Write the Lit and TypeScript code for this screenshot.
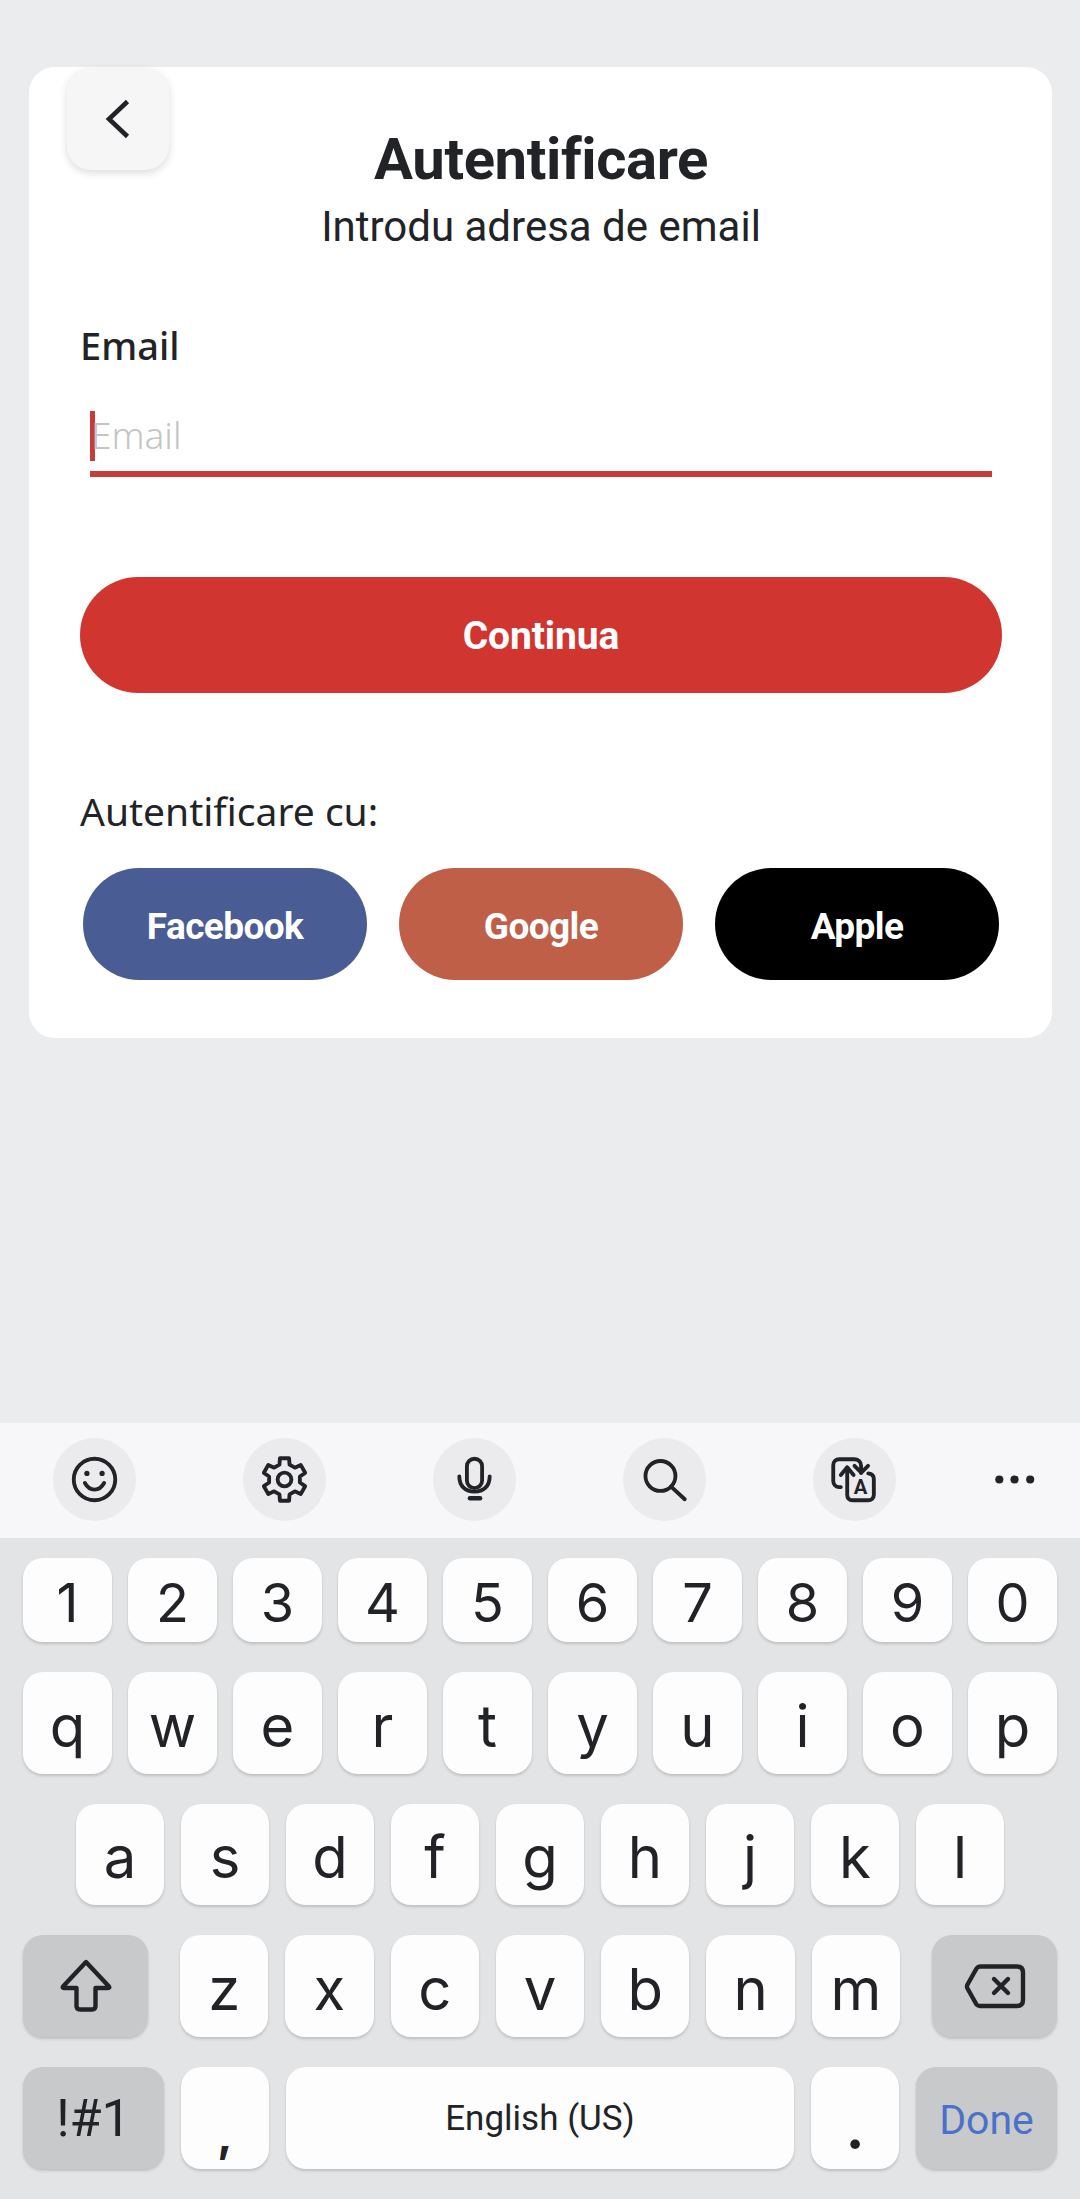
import { LitElement, css, html, svg } from "lit";
import { customElement } from "lit/decorators.js";

const gearPath = () => {
  // six teeth round the centre of the 82 box
  const pts: string[] = [];
  for (let i = 0; i < 6; i++) {
    const a = ((i * 60 - 90) * Math.PI) / 180;
    const step = (deg: number, r: number) => {
      const t = a + (deg * Math.PI) / 180;
      return `${(41 + r * Math.cos(t)).toFixed(1)} ${(41 + r * Math.sin(t)).toFixed(1)}`;
    };
    pts.push(step(-12, 21.5), step(12, 21.5), step(19, 15.5), step(41, 15.5));
  }
  return "M" + pts.join("L") + "Z";
};

const icons = {
  smile: svg`<circle cx="41" cy="41" r="20.5"/><path d="M31.5 44.5c2.5 4.5 5.8 6.5 9.5 6.5s7-2 9.5-6.5"/><circle class="fill" cx="33.5" cy="35" r="2.6"/><circle class="fill" cx="48.5" cy="35" r="2.6"/>`,
  gear: svg`<path d=${gearPath()}/><circle cx="41" cy="41" r="6.800"/>`,
  mic: svg`<rect x="33.5" y="20.5" width="15" height="29" rx="7.5"/><path d="M26 38c0 9.5 6 15 15 15s15-5.500 15-15"/><path d="M36.500 59.500h10" stroke-width="4.500"/>`,
  search: svg`<circle cx="37" cy="37.500" r="14.800"/><path d="M47.500 48l13.500 12.500"/>`,
  translate: svg`<path d="M27.500 48.500h-1.500c-3.500 0-6-2.500-6-6v-15.500c0-3.500 2.500-6 6-6h14.500c4 0 7 2.500 7 6.500v7"/><path d="M27.500 36.500l6.300-7.500 6.300 7.500"/><path d="M33.800 29v27c0 3.500 2 5.500 5.500 5.500h15c3.500 0 5.800-2 5.800-5.500v-15.500c0-3-1.500-5-5.500-5.500"/><path d="M41 27.500l6.700 6.700 6.700-6.700"/><text class="letter" x="47" y="55.500" text-anchor="middle">A</text>`,
  more: svg`<circle class="fill" cx="26" cy="41" r="4"/><circle class="fill" cx="41" cy="41" r="4"/><circle class="fill" cx="56.500" cy="41" r="4"/>`,
};

@customElement("app-root")
export class AppRoot extends LitElement {
  renderKeys(chars: string) {
    return chars.split("").map((c) => html`<div class="key">${c}</div>`);
  }

  render() {
    return html`
      <main class="card">
        <header class="head">
          <button class="back" aria-label="Inapoi">
            <svg width="26" height="40" viewBox="0 0 26 40">
              <path d="M22.500 2.500L4 20l18.500 17.500" />
            </svg>
          </button>
          <div class="titles">
            <h1>Autentificare</h1>
            <p>Introdu adresa de email</p>
          </div>
        </header>

        <div class="label">Email</div>
        <div class="input"><span class="caret"></span><span class="placeholder">Email</span></div>

        <button class="primary">Continua</button>

        <div class="label with">Autentificare cu:</div>
        <div class="social">
          <button class="facebook">Facebook</button>
          <button class="google">Google</button>
          <button class="apple">Apple</button>
        </div>
      </main>

      <section class="keyboard">
        <div class="toolbar">
          ${[icons.smile, icons.gear, icons.mic, icons.search, icons.translate].map(
            (icon) => html`<div class="tool"><svg width="83" height="83" viewBox="0 0 82 82">${icon}</svg></div>`,
          )}
          <div class="tool more"><svg width="83" height="83" viewBox="0 0 82 82">${icons.more}</svg></div>
        </div>
        <div class="keys">
          <div class="row numbers">${this.renderKeys("1234567890")}</div>
          <div class="row">${this.renderKeys("qwertyuiop")}</div>
          <div class="row home">${this.renderKeys("asdfghjkl")}</div>
          <div class="row third">
            <div class="key dark shift">
              <svg width="60" height="60" viewBox="0 0 60 60">
                <path d="M30 6L7 30.500Q6 32 8 32H20.500V50Q20.500 53.500 24 53.500H36Q39.500 53.500 39.500 50V32H52Q54 32 53 30.500Z" />
              </svg>
            </div>
            <div class="letters">${this.renderKeys("zxcvbnm")}</div>
            <div class="key dark shift">
              <svg width="64" height="48" viewBox="0 0 64 48">
                <path d="M17 4.500H54Q60 4.500 60 10.500V38Q60 44 54 44H17Q15 44 13.500 42.500L4.500 26.500Q3.500 24.500 4.500 22.500L13.500 6.500Q15 4.500 17 4.500Z" />
                <path d="M31 17l14 14M45 17l-14 14" />
              </svg>
            </div>
          </div>
          <div class="row bottom">
            <div class="key dark sym">!#1</div>
            <div class="key punct comma">,</div>
            <div class="key space">English (US)</div>
            <div class="key punct">.</div>
            <div class="key dark done">Done</div>
          </div>
        </div>
      </section>
    `;
  }

  static styles = css`
    :host {
      display: flex;
      flex-direction: column;
      min-height: 2199px;
      background: #ebecee;
      color: #222327;
      font-family: "Noto Sans", sans-serif;
    }

    button {
      border: none;
      padding: 0;
      font-family: Roboto, sans-serif;
    }

    .card {
      margin: 67px 28px 0 29px;
      height: 971px;
      box-sizing: border-box;
      padding: 0 50px 0 51px;
      background: #fff;
      border-radius: 26px;
    }

    .head {
      display: grid;
      margin: 0 -51px 0 -51px;
      height: 253px;
    }
    .back,
    .titles {
      grid-area: 1 / 1;
    }
    .back {
      justify-self: start;
      align-self: start;
      margin: 1px 0 0 38px;
      width: 102px;
      height: 102px;
      border-radius: 24px;
      background: #f6f6f6;
      box-shadow: 0 3px 8px rgba(0, 0, 0, 0.14);
      display: flex;
      align-items: center;
      justify-content: center;
      z-index: 1;
    }
    .back svg {
      fill: none;
      stroke: #222327;
      stroke-width: 4.6;
    }
    .titles {
      text-align: center;
      font-family: Roboto, sans-serif;
    }
    h1 {
      margin: 0;
      padding-top: 59px;
      font-size: 58px;
      line-height: 66px;
      font-weight: 700;
      letter-spacing: -0.4px;
    }
    .titles p {
      margin: 0;
      font-size: 42px;
      line-height: 48px;
      padding-top: 11px;
    }

    .label {
      font-size: 38px;
      line-height: 50px;
      font-weight: 500;
    }
    .label.with {
      margin-top: 93px;
      font-size: 39px;
      font-weight: 400;
    }

    .input {
      margin: 41px 10px 0 10px;
      height: 60px;
      display: flex;
      border-bottom: 6px solid #c63c37;
      box-sizing: content-box;
    }
    .caret {
      width: 5px;
      height: 50px;
      background: #c63c37;
      flex: none;
    }
    .placeholder {
      margin-left: -4px;
      height: 48px;
      font-size: 37px;
      line-height: 48px;
      font-weight: 300;
      color: #c4c4c4;
    }

    .primary {
      display: block;
      margin-top: 100px;
      width: 100%;
      height: 116px;
      border-radius: 58px;
      background: #d03530;
      color: #fff;
      font-size: 39px;
      font-weight: 700;
      letter-spacing: -0.1px;
      padding-top: 2px;
    }

    .social {
      display: flex;
      gap: 32px;
      margin: 32px 3px 0;
    }
    .social button {
      flex: 1;
      height: 112px;
      border-radius: 56px;
      color: #fff;
      font-size: 37px;
      font-weight: 700;
      letter-spacing: -0.6px;
      padding-top: 4px;
    }
    .facebook {
      background: #4a5c94;
    }
    .google {
      background: #bf5f48;
    }
    .apple {
      background: #000;
    }

    .keyboard {
      margin-top: auto;
      height: 776px;
      background: #e3e4e6;
      font-family: Inter, sans-serif;
    }
    .toolbar {
      display: flex;
      align-items: center;
      gap: 107px;
      height: 115px;
      padding-left: 53px;
      background: #f7f7f9;
    }
    .tool {
      flex: none;
      width: 83px;
      height: 83px;
      margin-top: -2px;
      border-radius: 50%;
      background: #ebebed;
    }
    .tool.more {
      background: none;
      margin-left: -30px;
    }
    .tool svg {
      display: block;
      fill: none;
      stroke: #222327;
      stroke-width: 3.8;
      stroke-linecap: round;
      stroke-linejoin: round;
    }
    .tool .fill {
      fill: #222327;
      stroke: none;
    }
    .tool .letter {
      fill: #222327;
      stroke: none;
      font: 700 20px Roboto, sans-serif;
    }

    .keys {
      display: flex;
      flex-direction: column;
      gap: 30px;
      padding: 20px 23px 0;
    }
    .row {
      display: flex;
      gap: 16px;
      height: 101.67px;
    }
    .row.numbers {
      height: 84px;
    }
    .row.home {
      gap: 17px;
      padding: 0 53px;
    }
    .row.third {
      gap: 32px;
    }
    .row.bottom {
      gap: 17px;
    }
    .letters {
      flex: 1;
      display: flex;
      gap: 17px;
    }
    .key {
      flex: 1;
      display: flex;
      align-items: center;
      justify-content: center;
      box-sizing: border-box;
      padding-top: 6px;
      background: #fdfdfe;
      border-radius: 20px;
      box-shadow: 0 2px 3px rgba(0, 0, 0, 0.16);
      font-size: 58px;
      line-height: 1;
    }
    .numbers .key {
      font-size: 54px;
      padding-top: 6px;
    }
    .key.dark {
      background: #c8c9cb;
    }
    .key.shift {
      flex: none;
      width: 125px;
      padding-top: 0;
    }
    .shift svg {
      fill: none;
      stroke: #222327;
      stroke-width: 4.4;
      stroke-linejoin: round;
      stroke-linecap: round;
    }
    .key.sym,
    .key.done {
      flex: none;
      width: 141px;
      font-family: Roboto, sans-serif;
      font-size: 52px;
      padding-top: 2px;
    }
    .key.done {
      font-size: 41px;
      color: #4a72c8;
      padding-top: 5px;
    }
    .key.punct {
      flex: none;
      width: 88px;
      font-size: 56px;
      font-weight: 700;
      align-items: flex-end;
      padding: 0 0 13px;
    }
    .key.punct.comma {
      font-size: 46px;
      padding-bottom: 12px;
    }
    .key.space {
      font-family: Roboto, sans-serif;
      font-size: 35px;
      padding-top: 2px;
    }
  `;
}
